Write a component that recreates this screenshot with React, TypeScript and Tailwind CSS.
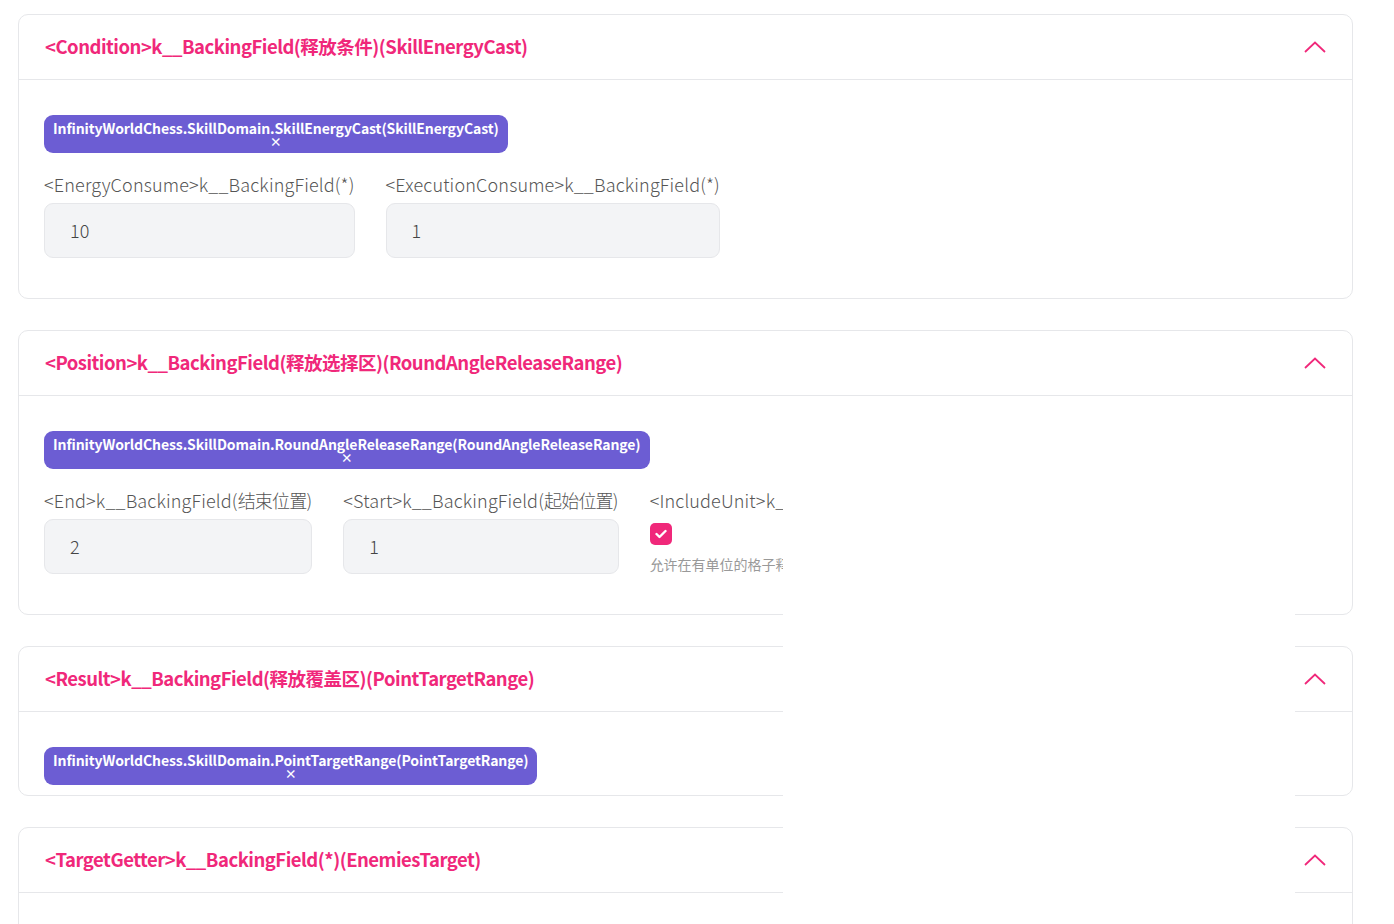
import React from "react";

const FONT = { fontFamily: '"Noto Sans CJK SC", "Noto Sans", sans-serif' };

function Chevron() {
  return (
    <svg width="22" height="12" viewBox="0 0 22 12" className="shrink-0">
      <polyline points="1,11 11,1.5 21,11" fill="none" stroke="#f0287a" strokeWidth="1.8" />
    </svg>
  );
}

function Badge({ text }: { text: string }) {
  return (
    <div className="inline-flex flex-col items-center rounded-[9px] bg-[#6c5dd3] px-[9px] pt-[4px] pb-[6px] text-white">
      <span className="text-[14px] font-bold leading-[18px] tracking-[-0.1px]">{text}</span>
      <span className="text-[12px] font-bold leading-[10px]">×</span>
    </div>
  );
}

function Label({ children }: { children: React.ReactNode }) {
  return (
    <div className="text-[18px] font-light leading-[24px] text-[#555] tracking-[0.15px] whitespace-nowrap">{children}</div>
  );
}

function Field({ label, cjk, value }: { label: string; cjk?: string; value: string }) {
  return (
    <div className="flex flex-col">
      <Label>
        {label}
        {cjk ? (
          <>
            (<span className="tracking-[-0.8px]">{cjk}</span>)
          </>
        ) : null}
      </Label>
      <div className="mt-[7px] flex h-[55px] items-center rounded-[9px] border border-[#e6e7ea] bg-[#f3f4f6] pl-[25px] text-[18px] font-light text-[#444]">
        {value}
      </div>
    </div>
  );
}

function Card({ title, children }: { title: string; children?: React.ReactNode }) {
  return (
    <div className="rounded-[10px] border border-[#e6e7ea] bg-white">
      <div className="flex h-[65px] items-center justify-between border-b border-[#e6e7ea] pl-[26px] pr-[26px]">
        <div className="text-[18.5px] font-bold tracking-[-0.5px] text-[#f0287a] whitespace-nowrap">{title}</div>
        <Chevron />
      </div>
      <div className="px-[25px] pt-[35px] pb-[10px]">{children}</div>
    </div>
  );
}

export default function App() {
  return (
    <div className="relative min-h-screen bg-white pl-[18px] pr-[41px] pt-[14px] overflow-hidden" style={FONT}>
      <div className="flex flex-col gap-[31px]">
        <Card title="<Condition>k__BackingField(释放条件)(SkillEnergyCast)">
          <Badge text="InfinityWorldChess.SkillDomain.SkillEnergyCast(SkillEnergyCast)" />
          <div className="mt-[19px] mb-[30px] flex gap-[31px]">
            <Field label="<EnergyConsume>k__BackingField(*)" value="10" />
            <Field label="<ExecutionConsume>k__BackingField(*)" value="1" />
          </div>
        </Card>
        <Card title="<Position>k__BackingField(释放选择区)(RoundAngleReleaseRange)">
          <Badge text="InfinityWorldChess.SkillDomain.RoundAngleReleaseRange(RoundAngleReleaseRange)" />
          <div className="mt-[19px] mb-[30px] flex gap-[31px]">
            <Field label="<End>k__BackingField" cjk="结束位置" value="2" />
            <Field label="<Start>k__BackingField" cjk="起始位置" value="1" />
            <div className="flex flex-col">
              <Label>&lt;IncludeUnit&gt;k__BackingField(包含单位)</Label>
              <div className="mt-[11px] flex h-[22px] w-[22px] items-center justify-center rounded-[5px] bg-[#f0287a]">
                <svg width="12" height="10" viewBox="0 0 12 10">
                  <polyline points="1.5,5 4.5,8 10.5,2" fill="none" stroke="white" strokeWidth="2.4" strokeLinecap="round" strokeLinejoin="round" />
                </svg>
              </div>
              <div className="mt-[9px] text-[14px] leading-[20px] text-[#999] whitespace-nowrap">允许在有单位的格子释放</div>
            </div>
          </div>
        </Card>
        <Card title="<Result>k__BackingField(释放覆盖区)(PointTargetRange)">
          <Badge text="InfinityWorldChess.SkillDomain.PointTargetRange(PointTargetRange)" />
        </Card>
        <Card title="<TargetGetter>k__BackingField(*)(EnemiesTarget)">
          <Badge text="InfinityWorldChess.SkillDomain.EnemiesTarget(EnemiesTarget)" />
        </Card>
      </div>
      <div className="absolute left-[783px] top-[420px] h-[504px] w-[512px] bg-white" />
    </div>
  );
}
